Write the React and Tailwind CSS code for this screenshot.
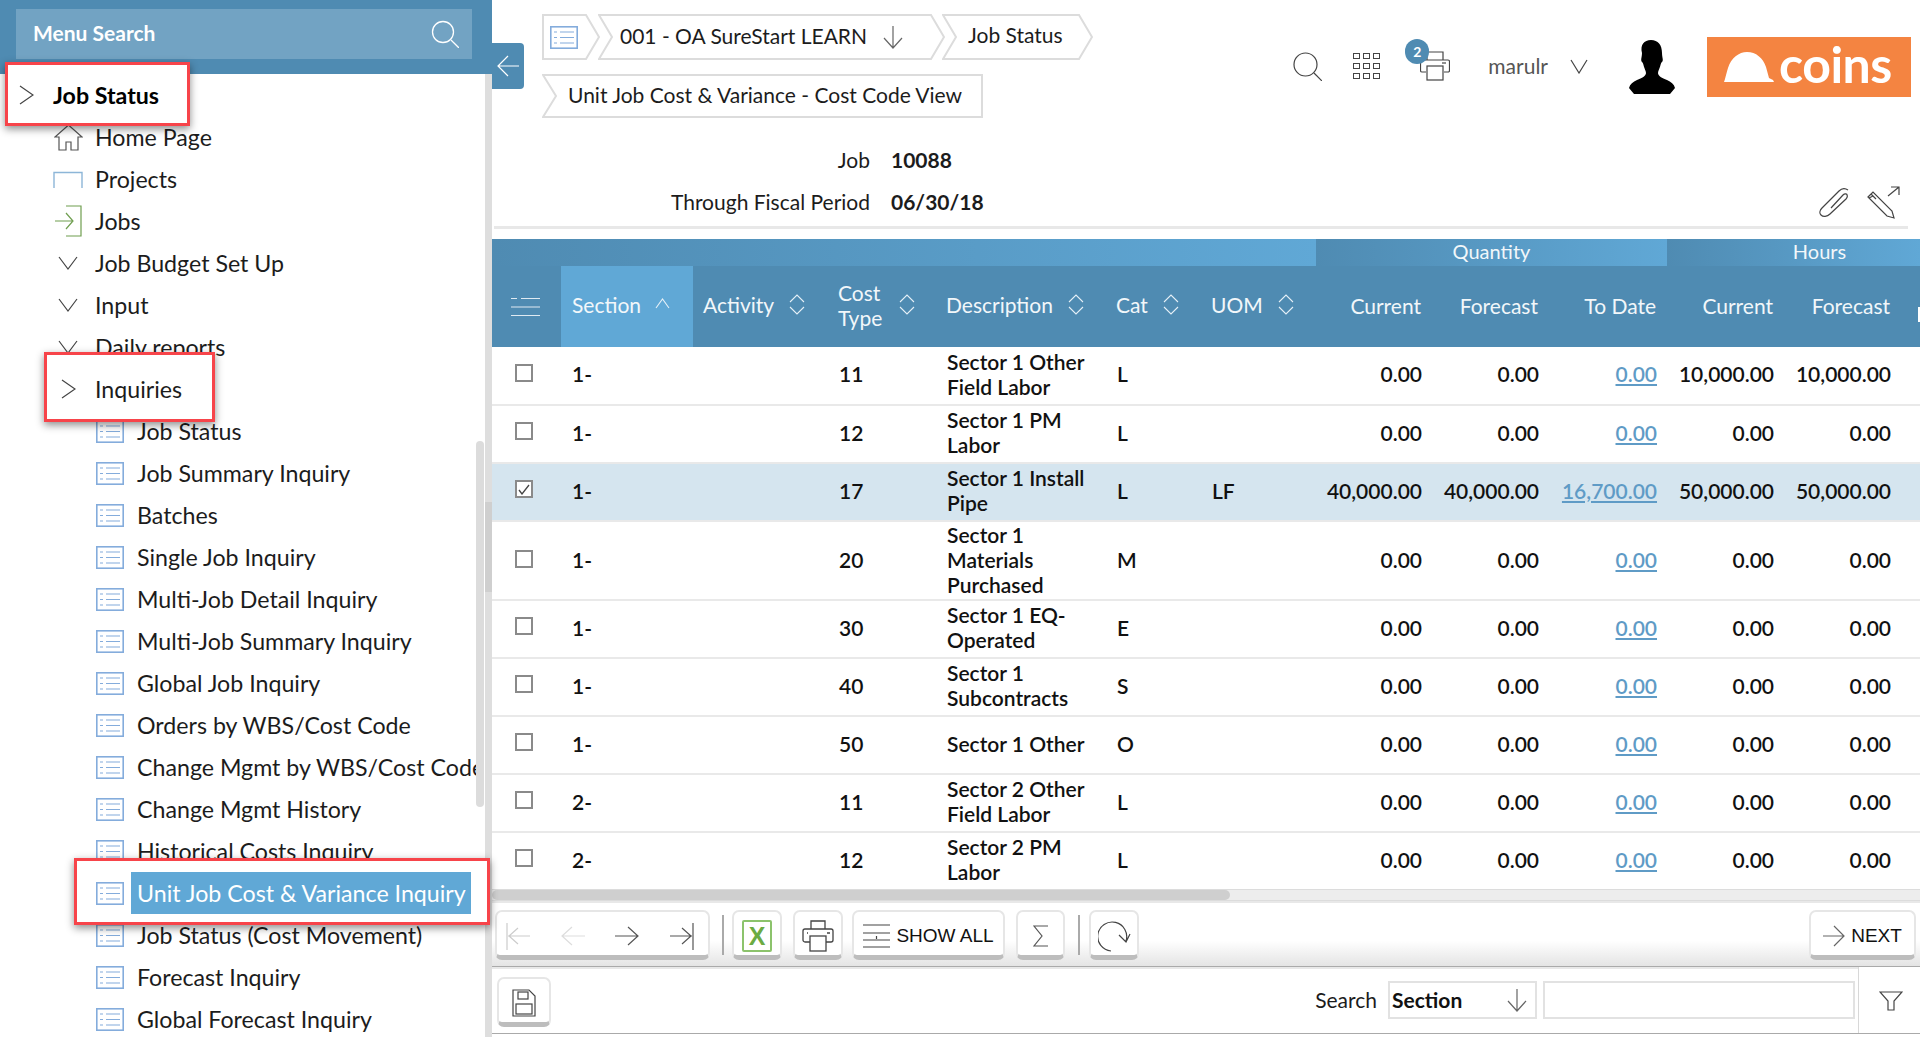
import React from "react";

const S = ({ w, h, vb, c = "#444", sw = 1.2, children, className = "" }) => (
  <svg width={w} height={h} viewBox={vb || `0 0 ${w} ${h}`} fill="none" stroke={c} strokeWidth={sw} className={`shrink-0 ${className}`}>
    {children}
  </svg>
);

const ChevR = () => <S w={15} h={20}><path d="M1 1l13 9-13 9" /></S>;
const ChevD = () => <S w={20} h={14}><path d="M1 1l9 12 9-12" /></S>;
const ListIcon = ({ w = 28, h = 23 }) => (
  <S w={w} h={h} vb="0 0 28 23" c="#84acdc" sw={1.2}>
    <rect x="0.8" y="0.8" width="26.4" height="21.4" fill="#fff" strokeWidth="1.6" />
    <path d="M4 6h3M10 6h14M4 11.500h3M10 11.500h14M4 17h3M10 17h14" />
  </S>
);
const Home = () => (
  <S w={29} h={27} c="#555"><path d="M1 13L14.500 1 28 13h-4v13h-7v-8h-5v8H5V13z" /></S>
);
const Projects = () => (
  <S w={30} h={17} c="#8db6d8" sw={1.4}><path d="M1 17V1.500h28V17" /></S>
);
const JobsIcon = () => (
  <S w={27} h={32} c="#6f9e4f"><path d="M11 1h15v30H11M0 16h17M11 8l7 8-7 8" /></S>
);

function Frame({ cls }) {
  return <div className={`absolute z-10 border-[3px] border-[#f7444a] bg-white shadow-[0_3px_8px_rgba(0,0,0,0.45)] ${cls}`} />;
}

const items = [
  { t: "Job Status", lvl: 0, bold: true, icon: <ChevR />, frame: "left-[5px] right-[286px] top-[-12px] bottom-[-10px]" },
  { t: "Home Page", lvl: 1, icon: <Home /> },
  { t: "Projects", lvl: 1, icon: <Projects /> },
  { t: "Jobs", lvl: 1, icon: <JobsIcon /> },
  { t: "Job Budget Set Up", lvl: 1, icon: <ChevD /> },
  { t: "Input", lvl: 1, icon: <ChevD /> },
  { t: "Daily reports", lvl: 1, icon: <ChevD /> },
  { t: "Inquiries", lvl: 1, icon: <ChevR />, frame: "left-[44px] right-[261px] top-[-16px] bottom-[-12px]" },
  { t: "Job Status", lvl: 2 },
  { t: "Job Summary Inquiry", lvl: 2 },
  { t: "Batches", lvl: 2 },
  { t: "Single Job Inquiry", lvl: 2 },
  { t: "Multi-Job Detail Inquiry", lvl: 2 },
  { t: "Multi-Job Summary Inquiry", lvl: 2 },
  { t: "Global Job Inquiry", lvl: 2 },
  { t: "Orders by WBS/Cost Code", lvl: 2 },
  { t: "Change Mgmt by WBS/Cost Code", lvl: 2 },
  { t: "Change Mgmt History", lvl: 2 },
  { t: "Historical Costs Inquiry", lvl: 2 },
  { t: "Unit Job Cost & Variance Inquiry", lvl: 2, sel: true, frame: "left-[74px] right-[-14px] top-[-14px] bottom-[-11px]" },
  { t: "Job Status (Cost Movement)", lvl: 2 },
  { t: "Forecast Inquiry", lvl: 2 },
  { t: "Global Forecast Inquiry", lvl: 2 },
];

function NavRow({ it }) {
  return (
    <div className={`relative h-[42px] flex items-center shrink-0 whitespace-nowrap ${it.frame ? "" : "overflow-hidden"}`}>
      {it.frame && <Frame cls={it.frame} />}
      <div className={`relative flex items-center h-full ${it.frame ? "z-20" : ""}`}>
        {it.lvl === 0 && (
          <>
            <div className="w-[19px]" />
            <div className="w-[34px]">{it.icon}</div>
          </>
        )}
        {it.lvl === 1 && (
          <div className="w-[95px] pl-[53px] flex items-center">
            <div className="w-[30px] flex justify-center">{it.icon}</div>
          </div>
        )}
        {it.lvl === 2 && (
          <div className="w-[131px] pl-[96px]"><ListIcon /></div>
        )}
        <div className={`text-[23.200px] leading-[42px] ${it.bold ? "font-bold text-black" : "text-[#1c1c1c]"} ${it.sel ? "bg-[#60a8d6] text-white pl-[6px] w-[340px]" : it.lvl === 2 ? "pl-[6px]" : ""}`}>
          {it.t}
        </div>
      </div>
    </div>
  );
}

function Sidebar() {
  return (
    <aside className="relative z-10 w-[492px] h-[1037px] shrink-0 flex flex-col bg-white">
      <div className="h-[74px] shrink-0 bg-[#4f8bb2] pt-[9px] pl-[16px] pr-[20px]">
        <div className="h-[50px] bg-[#72a3c3] flex items-center justify-between pl-[17px] pr-[13px]">
          <span className="text-white font-bold text-[21px] mt-[-3px]">Menu Search</span>
          <S w={28} h={28} c="#fff" sw={1.3}><circle cx="12" cy="12" r="10.500" /><path d="M20 20l8 8" /></S>
        </div>
      </div>
      <div className="flex-1 flex min-h-0">
        <div className="w-[476px] shrink-0 flex flex-col">
          {items.map((it, i) => <NavRow key={i} it={it} />)}
        </div>
        <div className="w-[9px] shrink-0 pt-[367px]">
          <div className="w-[8px] h-[366px] rounded-[4px] bg-[#dcdcdc]" />
        </div>
        <div className="w-[7px] shrink-0 flex flex-col bg-[#dedede]">
          <div className="h-[428px]" />
          <div className="h-[90px] bg-[#cfcfcf]" />
        </div>
      </div>
    </aside>
  );
}

function Crumb({ w, h, first, tailOnly, children, cls = "" }) {
  const n = 14;
  const W = w, H = h;
  const d = tailOnly
    ? `M1 1H${W - 1}V${H - 1}H1L${n} ${H / 2}Z`
    : first
    ? `M1 1H${W - n}L${W - 1} ${H / 2}L${W - n} ${H - 1}H1Z`
    : `M1 1H${W - n}L${W - 1} ${H / 2}L${W - n} ${H - 1}H1L${n} ${H / 2}Z`;
  return (
    <div className={`relative shrink-0 flex items-center ${cls}`} style={{ width: W, height: H }}>
      <svg className="absolute inset-0" width={W} height={H} fill="none" stroke="#dcdcdc" strokeWidth="2"><path d={d} /></svg>
      <div className="relative flex items-center whitespace-nowrap text-[21px] text-[#1c1c1c] mt-[-2px]">{children}</div>
    </div>
  );
}

function Header() {
  return (
    <header className="h-[239px] shrink-0 flex flex-col relative">
      <div className="flex justify-between h-[122px] shrink-0">
        <div className="pl-[50px] pt-[14px] flex flex-col gap-[14px]">
          <div className="flex">
            <Crumb w={58} h={46} first cls="pl-[8px]"><span className="mt-[2px]"><ListIcon w={28} h={25} /></span></Crumb>
            <Crumb w={347} h={46} cls="pl-[22px] ml-[-2px]">
              <span>001 - OA SureStart LEARN</span>
              <S w={20} h={24} c="#666" className="ml-[16px] mt-[2px]"><path d="M10 1v22M1 13l9 10 9-10" /></S>
            </Crumb>
            <Crumb w={151} h={46} cls="pl-[26px] ml-[-3px]"><span className="mt-[-2px]">Job Status</span></Crumb>
          </div>
          <Crumb w={441} h={44} tailOnly cls="pl-[26px]">Unit Job Cost & Variance - Cost Code View</Crumb>
        </div>
        <div className="flex items-start pt-[37px] pr-[9px]">
          <div className="flex items-center h-[58px] mr-[39px]">
            <S w={29} h={29} c="#444" sw={1.2} className="mr-[31px]"><circle cx="12.500" cy="12.500" r="11.500" /><path d="M21 21l8 8" /></S>
            <div className="grid grid-cols-3 gap-x-[3px] gap-y-[4px] mr-[40px]">
              {Array.from({ length: 9 }).map((_, i) => <div key={i} className="w-[7px] h-[6px] border border-[#444]" />)}
            </div>
            <div className="relative mr-[38px]">
              <S w={30} h={30} c="#444" sw={1.2}>
                <path d="M7 9V1h16v8M6 21H2a1.500 1.500 0 01-1.500-1.500V10.500A1.500 1.500 0 012 9h26a1.500 1.500 0 011.500 1.500v9A1.500 1.500 0 0128 21h-4" />
                <rect x="7" y="15" width="16" height="14" fill="#fff" /><path d="M22 12h4" />
              </S>
              <div className="absolute left-[-15px] top-[-12px] w-[24px] h-[25px] rounded-full bg-[#4f8bb2] text-white text-[14px] leading-[25px] text-center font-bold">2</div>
            </div>
            <span className="text-[21px] text-[#555] mr-[22px]">marulr</span>
            <S w={18} h={15} c="#444"><path d="M1 1l8 13 8-13" /></S>
          </div>
          <svg width="48" height="54" viewBox="0 0 48 54" className="mr-[32px] mt-[3px] shrink-0">
            <path fill="#000" d="M24 0c7 0 11 5 11 13 0 3 .8 5 .8 7 0 2-1.500 2-2 4-.8 4-2.800 7-2.800 9 0 3 4 5 9 7 4 2 7 4 8 8l-5 6H7l-5-6c1-4 4-6 8-8 5-2 9-4 9-7 0-2-2-5-2.800-9-.5-2-2-2-2-4 0-2 .8-4 .8-7C13 5 17 0 24 0z" />
          </svg>
          <div className="w-[204px] h-[60px] bg-[#f48441] flex items-center pl-[17px] gap-[5px]">
            <svg width="50" height="30" viewBox="0 0 50 30" className="shrink-0">
              <path fill="#fff" d="M0 30l1-3c1-4 2-8 3-11C7 6 15 0 23 0c9 0 16 6 19 15l3 11 4 2 1 2z" />
            </svg>
            <span className="text-white font-bold text-[50px] leading-[60px] tracking-[-0.5px] mt-[-6px]">coins</span>
          </div>
        </div>
      </div>
      <div className="grid grid-cols-[378px_1fr] text-[21px] h-[84px] shrink-0 mt-[17px]">
        <div className="text-right text-[#1c1c1c] leading-[41px]">Job</div>
        <div className="pl-[21px] font-bold text-[#1c1c1c] leading-[41px]">10088</div>
        <div className="text-right text-[#1c1c1c] leading-[41px]">Through Fiscal Period</div>
        <div className="pl-[21px] font-bold text-[#1c1c1c] leading-[41px]">06/30/18</div>
      </div>
      <div className="ml-[2px] mr-[12px] h-[3px] bg-[#e8e8e8] mt-[3px]" />
      <div className="absolute right-[20px] top-[186px] flex items-center gap-[17px]">
        <svg width="31" height="29" viewBox="0 0 31 29" fill="none" stroke="#444" strokeWidth="1.200">
          <path d="M12 20L24 7c2-2 4-1 4 0 1 2 0 3-1 4L11 26c-3 3-7 3-9 1s-1-5 1-7L20 3c3-3 6-3 9-1" />
        </svg>
        <svg width="33" height="33" viewBox="0 0 33 33" fill="none" stroke="#444" strokeWidth="1.200">
          <path d="M1 11l5-5 19 19 2 7-7-2zM4 8l5 5M2 12l4-2M21 10L32 1M24 1h8v8" />
        </svg>
      </div>
      <button className="absolute left-0 top-[43px] w-[32px] h-[46px] bg-[#4f8bb2] rounded-r-[4px] flex items-center justify-center">
        <S w={22} h={22} c="#fff" sw={1.2}><path d="M22 11H1M11 1L1 11l10 10" /></S>
      </button>
    </header>
  );
}

const rows = [
  ["1-", "11", "Sector 1 Other Field Labor", "L", "", "0.00", "0.00", "0.00", "10,000.00", "10,000.00"],
  ["1-", "12", "Sector 1 PM Labor", "L", "", "0.00", "0.00", "0.00", "0.00", "0.00"],
  ["1-", "17", "Sector 1 Install Pipe", "L", "LF", "40,000.00", "40,000.00", "16,700.00", "50,000.00", "50,000.00"],
  ["1-", "20", "Sector 1 Materials Purchased", "M", "", "0.00", "0.00", "0.00", "0.00", "0.00"],
  ["1-", "30", "Sector 1 EQ-Operated", "E", "", "0.00", "0.00", "0.00", "0.00", "0.00"],
  ["1-", "40", "Sector 1 Subcontracts", "S", "", "0.00", "0.00", "0.00", "0.00", "0.00"],
  ["1-", "50", "Sector 1 Other", "O", "", "0.00", "0.00", "0.00", "0.00", "0.00"],
  ["2-", "11", "Sector 2 Other Field Labor", "L", "", "0.00", "0.00", "0.00", "0.00", "0.00"],
  ["2-", "12", "Sector 2 PM Labor", "L", "", "0.00", "0.00", "0.00", "0.00", "0.00"],
];

const Diamond = () => (
  <S w={16} h={21} c="#e6f0f7" sw={1.1} className="ml-[15px]"><path d="M1 8l7-7 7 7M1 13l7 7 7-7" /></S>
);

function Th({ children, sort = true }) {
  return (
    <th className="font-normal text-left p-0 pl-[10px] pb-[4px] text-[#f2f7fa]">
      <div className="flex items-center">
        <span className="leading-[25px]">{children}</span>
        {sort && <Diamond />}
      </div>
    </th>
  );
}
const ThR = ({ children }) => (
  <th className="font-normal text-right p-0 pr-[11px] pb-[4px] text-[#f2f7fa]"><span className="relative top-[1px]">{children}</span></th>
);

function Grid() {
  const grad = "bg-gradient-to-r from-[#4f8bb2] to-[#60a8d6]";
  return (
    <div className="h-[650px] shrink-0 overflow-hidden">
      <table className="table-fixed border-collapse w-[1428px] text-[21px]">
        <colgroup>
          <col className="w-[69px]" /><col className="w-[132px]" /><col className="w-[135px]" /><col className="w-[108px]" />
          <col className="w-[170px]" /><col className="w-[95px]" /><col className="w-[115px]" /><col className="w-[116px]" />
          <col className="w-[117px]" /><col className="w-[118px]" /><col className="w-[117px]" /><col className="w-[117px]" /><col className="w-[19px]" />
        </colgroup>
        <thead>
          <tr className="h-[27px]">
            <th colSpan={7} className={`p-0 ${grad}`} />
            <th colSpan={3} className={`p-0 pb-[3px] font-normal text-[#f2f7fa] text-[20px] leading-[24px] ${grad}`}>Quantity</th>
            <th colSpan={3} className={`p-0 pb-[3px] pl-[52px] font-normal text-[#f2f7fa] text-[20px] leading-[24px] ${grad}`}>Hours</th>
          </tr>
          <tr className="h-[81px] bg-[#4f8bb2]">
            <th className="p-0 pl-[19px]">
              <S w={29} h={18} c="#dfeaf2" sw={1.2}><path d="M0 .500h6M0 9h29M0 17.500h29M10 .500h19" /></S>
            </th>
            <th className="font-normal text-left p-0 pl-[11px] pb-[4px] bg-[#60a8d6] text-[#f2f7fa]">
              <div className="flex items-center">Section<S w={15} h={11} c="#e6f0f7" sw={1.1} className="ml-[14px] mb-[3px]"><path d="M1 10l6.500-9L14 10" /></S></div>
            </th>
            <Th>Activity</Th>
            <Th><span className="block w-[46px]">Cost Type</span></Th>
            <Th>Description</Th>
            <Th>Cat</Th>
            <Th>UOM</Th>
            <ThR>Current</ThR><ThR>Forecast</ThR><ThR>To Date</ThR><ThR>Current</ThR><ThR>Forecast</ThR>
            <th className="p-0"><div className="ml-auto w-[2px] h-[15px] bg-white relative top-[8px]" /></th>
          </tr>
        </thead>
        <tbody className="font-semibold text-[#111]">
          {rows.map((r, i) => (
            <tr key={i} className={`border-b-2 border-[#e9e9e9] leading-[25px] ${i === 2 ? "bg-[#d5e5ef]" : ""} ${i === 3 ? "h-[79px] [&>td]:pb-[2px]" : "h-[58px] [&>td]:pb-[4px]"}`}>
              <td className="p-0 pl-[23px]">
                <div className="w-[18px] h-[18px] border-2 border-[#8a8a8a] bg-white flex items-center justify-center relative top-[-1px]">
                  {i === 2 && <S w={12} h={11} c="#444" sw={1.300}><path d="M1 6l3 4 7-9" /></S>}
                </div>
              </td>
              <td className="p-0 pl-[11px]">{r[0]}</td>
              <td className="p-0" />
              <td className="p-0 pl-[11px]">{r[1]}</td>
              <td className="p-0 pl-[11px] pr-[6px]">{r[2]}</td>
              <td className="p-0 pl-[11px]">{r[3]}</td>
              <td className="p-0 pl-[11px]">{r[4]}</td>
              <td className="p-0 pr-[10px] text-right">{r[5]}</td>
              <td className="p-0 pr-[10px] text-right">{r[6]}</td>
              <td className="p-0 pr-[10px] text-right text-[#5f9bc6] underline">{r[7]}</td>
              <td className="p-0 pr-[10px] text-right">{r[8]}</td>
              <td className="p-0 pr-[10px] text-right">{r[9]}</td>
              <td className="p-0" />
            </tr>
          ))}
        </tbody>
      </table>
    </div>
  );
}

const btn = "h-[50px] shrink-0 bg-white border-2 border-[#e6e6e6] border-b-[5px] border-b-[#bdbdbd] rounded-[7px] flex items-center pt-[5px]";

const ArrowL = ({ bar, c }) => (
  <S w={24} h={28} c={c} sw={1.2}>
    <path d={bar ? "M24 14H2M12 6l-9 8 9 8M1 1v27" : "M24 14H1M11 5l-10 9 10 9"} />
  </S>
);
const ArrowR = ({ bar, c }) => (
  <S w={24} h={28} c={c} sw={1.2}>
    <path d={bar ? "M0 14h22M12 6l9 8-9 8M23 1v27" : "M0 14h23M13 5l10 9-10 9"} />
  </S>
);
const Sep = () => <div className="w-[2px] h-[40px] bg-[#aaa] shrink-0" />;

function Toolbar() {
  return (
    <>
      <div className="h-[12px] shrink-0 bg-[#ededed] border-y border-[#dcdcdc] flex">
        <div className="w-[738px] h-full rounded-[5px] bg-[#cfcfcf]" />
      </div>
      <div className="h-[2px] shrink-0 bg-[#e8e8e8]" />
      <div className="h-[64px] shrink-0 bg-gradient-to-b from-white from-60% to-[#e4e4e4] border-b border-[#aaa] flex items-start pt-[7px] pl-[3px] pr-[4px]">
        <div className={`${btn} w-[215px] justify-between pl-[9px] pr-[14px]`}>
          <ArrowL bar c="#ccc" /><ArrowL c="#ddd" /><ArrowR c="#555" /><ArrowR bar c="#555" />
        </div>
        <div className="ml-[12px] mr-[8px] mt-[5px]"><Sep /></div>
        <div className={`${btn} w-[50px] justify-center`}>
          <div className="w-[30px] h-[32px] border-2 border-[#8cc36c] rounded-[2px] flex items-center justify-center text-[#6cab43] font-bold text-[25px] leading-none [font-family:'Liberation_Sans',sans-serif]">X</div>
        </div>
        <div className={`${btn} w-[50px] ml-[11px] justify-center`}>
          <S w={32} h={32} c="#444" sw={1.3}>
            <path d="M9 9V1h14v8M8 22H3a2 2 0 01-2-2v-9a2 2 0 012-2h26a2 2 0 012 2v9a2 2 0 01-2 2h-5" />
            <rect x="8" y="16" width="16" height="15" fill="#fff" /><path d="M5 13h1M25 13h3" />
          </S>
        </div>
        <div className={`${btn} w-[153px] ml-[9px] gap-[6px] justify-center`}>
          <S w={27} h={24} c="#444" sw={1.2}><path d="M0 1h27M0 9h27M0 16h27M0 23h27M13.500 12v3" /></S>
          <span className="text-[19px] [font-family:'Liberation_Sans',sans-serif] text-[#111]">SHOW ALL</span>
        </div>
        <div className={`${btn} w-[49px] ml-[11px] justify-center`}>
          <S w={16} h={22} c="#555" sw={1.2}><path d="M15 1H1l8 10-8 10h14" /></S>
        </div>
        <div className="ml-[13px] mr-[9px] mt-[5px]"><Sep /></div>
        <div className={`${btn} w-[50px] justify-center`}>
          <S w={33} h={31} c="#444" sw={1.2}><path d="M13 30A14.500 14.500 0 1 1 28 20M21 14l7 7 4-8" /></S>
        </div>
        <div className="flex-1" />
        <div className={`${btn} w-[107px] gap-[6px] justify-center`}>
          <S w={22} h={24} c="#666" sw={1.2}><path d="M0 12h21M11 2l10 10-10 10" /></S>
          <span className="text-[19px] [font-family:'Liberation_Sans',sans-serif] text-[#111]">NEXT</span>
        </div>
      </div>
    </>
  );
}

function SearchBar() {
  return (
    <div className="h-[67px] shrink-0 border-b border-[#aaa] flex items-start">
      <div className="flex-1 h-full flex flex-col">
        <div className="h-[2px] bg-[#e8e8e8] shrink-0" />
        <div className="flex-1 flex items-center pl-[5px] pr-[3px] pb-[2px]">
          <div className={`${btn} w-[54px] justify-center mt-[4px]`}>
            <S w={24} h={28} c="#444" sw={1.2}>
              <path d="M1 1h16l6 6v20H1z" /><rect x="6" y="3" width="10" height="7" /><rect x="4" y="15" width="16" height="10" />
            </S>
          </div>
          <div className="flex-1" />
          <span className="text-[21px] text-[#1c1c1c] mr-[11px]">Search</span>
          <div className="w-[149px] h-[38px] border-2 border-[#e2e2e2] flex items-center justify-between pl-[2px] pr-[8px]">
            <span className="font-bold text-[21px] text-[#111]">Section</span>
            <S w={20} h={24} c="#666"><path d="M10 1v22M1 13l9 10 9-10" /></S>
          </div>
          <div className="w-[312px] h-[38px] border-2 border-[#e2e2e2] ml-[6px]" />
        </div>
      </div>
      <div className="w-[62px] h-full shrink-0 border-l border-[#d8d8d8] flex items-center justify-center pl-[2px] pt-[2px]">
        <S w={24} h={20} c="#444" sw={1.2}><path d="M1 1h22l-8 9v9H9v-9z" /></S>
      </div>
    </div>
  );
}

export default function App() {
  return (
    <div className="w-[1920px] h-[1037px] flex overflow-hidden bg-white [font-family:Lato,sans-serif]">
      <Sidebar />
      <main className="flex-1 min-w-0 flex flex-col">
        <Header />
        <Grid />
        <Toolbar />
        <SearchBar />
      </main>
    </div>
  );
}
